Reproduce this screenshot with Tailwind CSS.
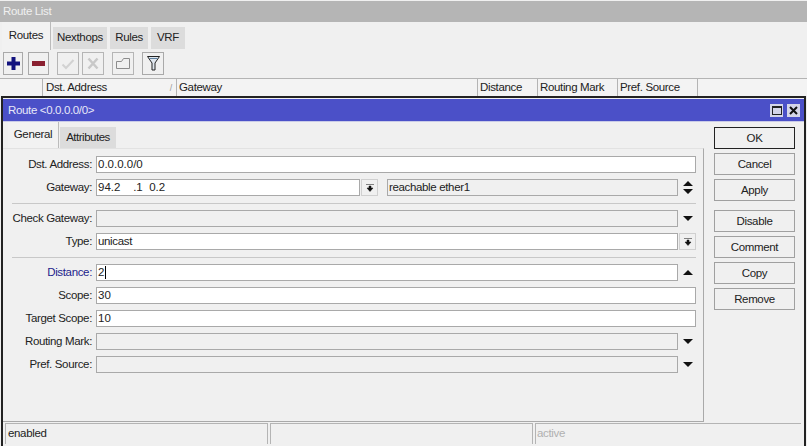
<!DOCTYPE html>
<html><head><meta charset="utf-8"><script src="https://cdn.jsdelivr.net/npm/@tailwindcss/browser@4"></script></head>
<body class="m-0">
<div class="w-[807px] h-[446px] overflow-hidden bg-[#f0f0f0] flex flex-col font-['Liberation_Sans',sans-serif] text-[11.5px] leading-none tracking-[-0.35px] text-[#222]">
  <div class="h-[21px] mt-px shrink-0 bg-[#b5b5b5] text-[#f0f0f0] flex items-center pl-[3px]">Route List</div>
  <!-- outer tabs -->
  <div class="h-[28px] shrink-0 flex items-end pl-[2px] gap-[3px]">
    <div class="w-[49px] h-[28px] bg-[#f2f2f2] border-r border-[#bbb] flex items-center justify-center pb-[1px]">Routes</div>
    <div class="w-[54px] -ml-px h-[22px] mb-px bg-[#dcdcdc] flex items-center justify-center">Nexthops</div>
    <div class="w-[38px] h-[22px] mb-px bg-[#dcdcdc] flex items-center justify-center">Rules</div>
    <div class="w-[34px] h-[22px] mb-px bg-[#dcdcdc] flex items-center justify-center">VRF</div>
  </div>
  <!-- toolbar -->
  <div class="h-[28px] shrink-0 flex items-start pt-[2px] pl-[3px]">
    <div class="w-[20px] h-[23px] border border-[#a9a9a9] flex items-center justify-center">
      <svg width="13" height="13" viewBox="0 0 13 13"><path d="M4.500 0h4v4.500H13v4H8.500V13h-4V8.500H0v-4h4.500z" fill="#12127e"/></svg>
    </div>
    <div class="w-[21px] h-[23px] ml-[5px] border border-[#a9a9a9] flex items-center justify-center">
      <svg width="13" height="5" viewBox="0 0 13 5"><rect width="13" height="5" fill="#8a2030"/></svg>
    </div>
    <div class="w-[22px] h-[23px] ml-[8px] border border-[#b5b5b5] flex items-center justify-center">
      <svg width="14" height="12" viewBox="0 0 14 12"><path d="M1.500 6.500l3.500 3.500 7.500-8" fill="none" stroke="#d2d2d2" stroke-width="2"/></svg>
    </div>
    <div class="w-[22px] h-[23px] ml-[3px] border border-[#b5b5b5] flex items-center justify-center">
      <svg width="12" height="13" viewBox="0 0 12 13"><path d="M1.500 1.500l9 10M10.500 1.500l-9 10" fill="none" stroke="#c8c8c8" stroke-width="2.500"/></svg>
    </div>
    <div class="w-[22px] h-[23px] ml-[8px] border border-[#b5b5b5] flex items-center justify-center">
      <svg width="14" height="11" viewBox="0 0 14 11"><path d="M.5 3.500h5l2-3h6v10H.5z" fill="none" stroke="#8c8c8c"/></svg>
    </div>
    <div class="w-[22px] h-[23px] ml-[8px] border border-[#a9a9a9] flex items-center justify-center">
      <svg width="13" height="15" viewBox="0 0 13 15"><path d="M.5.500h12L8 7v7H5V7z" fill="#dfe6ee" stroke="#222"/><path d="M2.500 2.500h8" stroke="#5d7f9e"/></svg>
    </div>
  </div>
  <!-- table header -->
  <div class="h-[18px] shrink-0 flex border-t border-[#b4b4b4] bg-[#f3f3f3]">
    <div class="w-[43px] border-r border-[#b4b4b4]"></div>
    <div class="w-[134px] border-r border-[#b4b4b4] pl-[3px] pt-px flex items-center justify-between pr-[4px]"><span>Dst. Address</span><span class="text-[#999] text-[9px]">/</span></div>
    <div class="w-[301px] border-r border-[#b4b4b4] pl-[2px] pt-px flex items-center">Gateway</div>
    <div class="w-[60px] border-r border-[#b4b4b4] pl-[2px] pt-px flex items-center">Distance</div>
    <div class="w-[80px] border-r border-[#b4b4b4] pl-[2px] pt-px flex items-center">Routing Mark</div>
    <div class="w-[80px] border-r border-[#b4b4b4] pl-[2px] pt-px flex items-center">Pref. Source</div>
  </div>
  <!-- dialog -->
  <div class="flex-1 min-h-0 flex flex-col border-t-2 border-x-2 border-[#222] mx-px bg-[#f0f0f0]">
    <div class="h-[23px] mt-px shrink-0 bg-[#4b50c8] border-b border-[#c9cbe8] text-[#e8e8f8] flex items-center justify-between pl-[5px] pr-[4px]">
      <span class="pt-[2px]">Route &lt;0.0.0.0/0&gt;</span>
      <span class="flex gap-[4px]">
        <span class="w-[13px] h-[13px] bg-[#d5d5e8] flex items-center justify-center"><span class="w-[10px] h-[9px] border border-[#222] border-t-2"></span></span>
        <span class="w-[13px] h-[13px] bg-[#d5d5e8] flex items-center justify-center"><svg width="9" height="9" viewBox="0 0 9 9"><path d="M1 1l7 7M8 1L1 8" stroke="#111" stroke-width="2"/></svg></span>
      </span>
    </div>
    <div class="flex-1 min-h-0 flex">
      <!-- left column -->
      <div class="w-[701px] shrink-0 flex flex-col">
        <div class="h-[26px] shrink-0 flex items-end pl-[5px] gap-px">
          <div class="w-[51px] h-[26px] bg-[#f2f2f2] border-r border-[#bbb] flex items-center justify-center pb-[1px]">General</div>
          <div class="w-[56px] h-[21px] bg-[#dcdcdc] flex items-center justify-center tracking-[-0.5px]">Attributes</div>
        </div>
        <div class="h-[274px] border-r border-b border-t border-t-[#e2e2e2] border-[#a9a9a9] shrink-0 pt-[7px] flex flex-col">
          <div class="flex h-[23px]"><div class="w-[93px] pr-[4px] h-[17px] flex items-center justify-end">Dst. Address:</div><div class="w-[600px] h-[17px] border border-[#a9a9a9] bg-white pl-[1px] flex items-center tracking-normal">0.0.0.0/0</div></div>
          <div class="flex h-[23px]"><div class="w-[93px] pr-[4px] h-[17px] flex items-center justify-end">Gateway:</div><div class="w-[264px] h-[17px] border border-[#a9a9a9] bg-white pl-[1px] flex items-center whitespace-pre tracking-normal">94.2    .1  0.2</div>
            <div class="w-[17px] h-[17px] ml-px border border-[#d0d0d0] flex items-center justify-center"><svg width="8" height="8" viewBox="0 0 8 8"><path d="M0 .5h8M3 2h2v2h2L4 7.500 1 4h2z" stroke="#111" stroke-width="0.500" fill="#111"/></svg></div>
            <div class="w-[291px] h-[17px] ml-[9px] border border-[#a9a9a9] pl-[1px] flex items-center">reachable ether1</div>
            <svg class="ml-[5px] mt-[2px]" width="10" height="13" viewBox="0 0 10 13"><path d="M5 0l5 5H0zM5 13L0 8h10z" fill="#111"/></svg></div>
          <div class="ml-[9px] w-[684px] h-px bg-[#c8c8c8] mt-[1px] mb-[6px]"></div>
          <div class="flex h-[23px]"><div class="w-[93px] pr-[4px] h-[17px] flex items-center justify-end">Check Gateway:</div><div class="w-[582px] h-[17px] border border-[#a9a9a9]"></div>
            <svg class="ml-[5px] mt-[6px]" width="10" height="5" viewBox="0 0 10 5"><path d="M0 0h10L5 5z" fill="#111"/></svg></div>
          <div class="flex h-[23px]"><div class="w-[93px] pr-[4px] h-[17px] flex items-center justify-end">Type:</div><div class="w-[582px] h-[17px] border border-[#a9a9a9] bg-white pl-[1px] flex items-center">unicast</div>
            <div class="w-[17px] h-[17px] ml-px border border-[#d0d0d0] flex items-center justify-center"><svg width="8" height="8" viewBox="0 0 8 8"><path d="M0 .5h8M3 2h2v2h2L4 7.500 1 4h2z" stroke="#111" stroke-width="0.500" fill="#111"/></svg></div></div>
          <div class="ml-[9px] w-[684px] h-px bg-[#c8c8c8] mt-[1px] mb-[6px]"></div>
          <div class="flex h-[23px]"><div class="w-[93px] pr-[4px] h-[17px] flex items-center justify-end text-[#1c1c8c]">Distance:</div><div class="w-[582px] h-[17px] border border-[#a9a9a9] bg-white pl-[1px] flex items-center">2<span class="w-px h-[13px] ml-px bg-black"></span></div>
            <svg class="ml-[5px] mt-[6px]" width="10" height="5" viewBox="0 0 10 5"><path d="M5 0l5 5H0z" fill="#111"/></svg></div>
          <div class="flex h-[23px]"><div class="w-[93px] pr-[4px] h-[17px] flex items-center justify-end">Scope:</div><div class="w-[600px] h-[17px] border border-[#a9a9a9] bg-white pl-[1px] flex items-center tracking-normal">30</div></div>
          <div class="flex h-[23px]"><div class="w-[93px] pr-[4px] h-[17px] flex items-center justify-end">Target Scope:</div><div class="w-[600px] h-[17px] border border-[#a9a9a9] bg-white pl-[1px] flex items-center tracking-normal">10</div></div>
          <div class="flex h-[23px]"><div class="w-[93px] pr-[4px] h-[17px] flex items-center justify-end">Routing Mark:</div><div class="w-[582px] h-[17px] border border-[#a9a9a9]"></div>
            <svg class="ml-[5px] mt-[6px]" width="10" height="5" viewBox="0 0 10 5"><path d="M0 0h10L5 5z" fill="#111"/></svg></div>
          <div class="flex h-[23px]"><div class="w-[93px] pr-[4px] h-[17px] flex items-center justify-end">Pref. Source:</div><div class="w-[582px] h-[17px] border border-[#a9a9a9]"></div>
            <svg class="ml-[5px] mt-[6px]" width="10" height="5" viewBox="0 0 10 5"><path d="M0 0h10L5 5z" fill="#111"/></svg></div>
        </div>
      </div>
      <!-- buttons -->
      <div class="ml-[10px] w-[81px] pt-[5px] flex flex-col gap-[4px]">
        <div class="h-[22px] pt-px border border-[#222] flex items-center justify-center">OK</div>
        <div class="h-[22px] pt-px border border-[#a0a0a0] flex items-center justify-center">Cancel</div>
        <div class="h-[22px] pt-px border border-[#a0a0a0] flex items-center justify-center">Apply</div>
        <div class="h-[22px] pt-px mt-[5px] border border-[#a0a0a0] flex items-center justify-center">Disable</div>
        <div class="h-[22px] pt-px border border-[#a0a0a0] flex items-center justify-center">Comment</div>
        <div class="h-[22px] pt-px border border-[#a0a0a0] flex items-center justify-center">Copy</div>
        <div class="h-[22px] pt-px border border-[#a0a0a0] flex items-center justify-center">Remove</div>
      </div>
    </div>
    <!-- status -->
    <div class="h-[24px] shrink-0 flex gap-[2px] pl-[2px] pr-[3px] pt-px pb-[2px]">
      <div class="w-[263px] border-t border-x border-[#b4b4b4] pl-[2px] flex items-center">enabled</div>
      <div class="w-[263px] border-t border-x border-[#b4b4b4]"></div>
      <div class="w-[266px] border-t border-l border-[#b4b4b4] pl-[1px] flex items-center text-[#b0b0b0]">active</div>
    </div>
  </div>
</div>
</body></html>
